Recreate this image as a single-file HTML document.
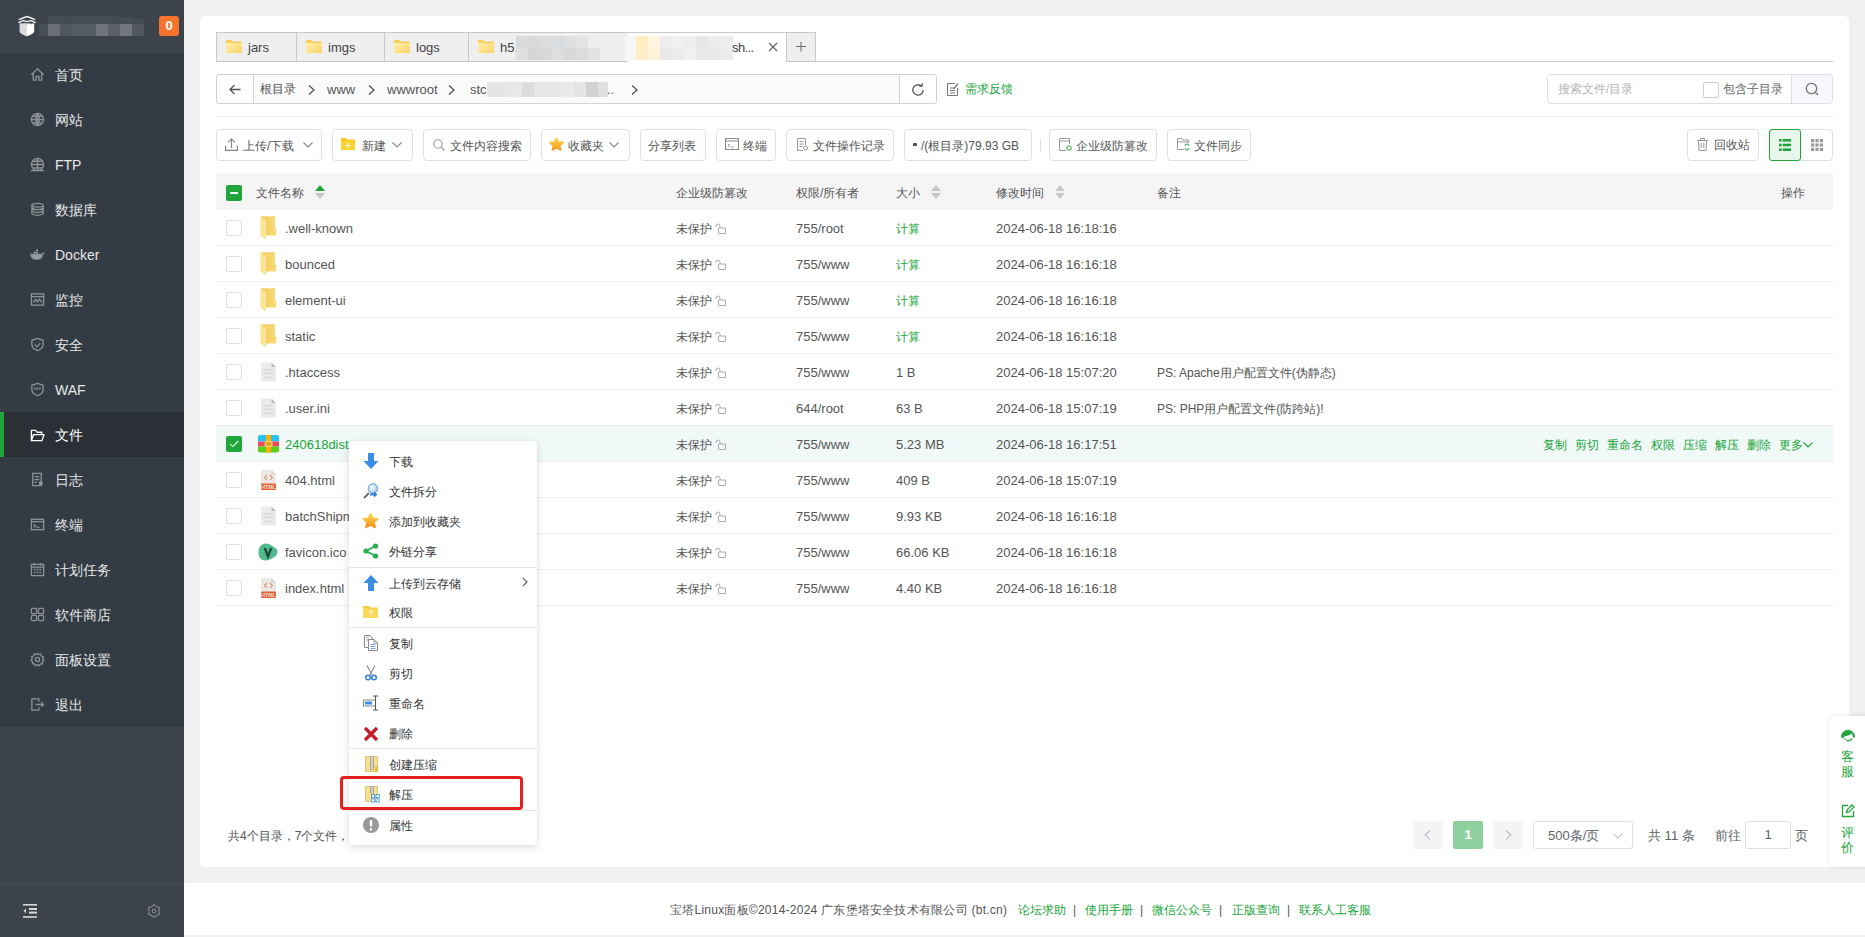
<!DOCTYPE html><html><head><meta charset="utf-8"><style>
*{margin:0;padding:0;box-sizing:border-box}
html,body{width:1865px;height:937px;overflow:hidden;background:#f0f0f0;font-family:"Liberation Sans",sans-serif;color:#666;font-size:12px}
.a{position:absolute}
.t{position:absolute;white-space:nowrap;line-height:1}
svg{position:absolute;overflow:visible}
</style></head><body>

<div class="a" style="left:0;top:0;width:184px;height:937px;background:#3c434b"></div>
<div class="a" style="left:0;top:53px;width:184px;height:674px;background:#333c44"></div>
<div class="a" style="left:0;top:883px;width:184px;height:1px;background:#454c54"></div>
<svg style="left:0px;top:0px" width="50" height="50" viewBox="0 0 50 50">
<path d="M19.8 23.4 H34.2 V31.5 Q34 33.8 27 36.2 Q20 33.8 19.8 31.5 Z" fill="#ffffff"/>
<path d="M19.8 23.4 H27 V36.2 Q20 33.8 19.8 31.5 Z" fill="#dcdcdc"/>
<path d="M18.3 22.6 L23 20.6 L27 21.6 L31 20.6 L35.7 22.6" stroke="#f0f0f0" stroke-width="1.4" fill="none" stroke-linejoin="round"/>
<path d="M18.8 19.6 L23 18 L27 16.5 L31 18 L35.2 19.6" stroke="#f0f0f0" stroke-width="1.4" fill="none" stroke-linejoin="round"/>
<path d="M22 23.4 L22.4 24.8 L23 23.4 M26.6 23.4 L27 24.8 L27.4 23.4 M31 23.4 L31.4 24.8 L32 23.4" fill="#3c434b"/>
</svg>
<div class="a" style="left:39px;top:24px;width:9px;height:12px;background:#474e56"></div>
<div class="a" style="left:48px;top:16px;width:12px;height:8px;background:#464d55"></div>
<div class="a" style="left:48px;top:24px;width:12px;height:12px;background:#6a6f75"></div>
<div class="a" style="left:60px;top:16px;width:12px;height:8px;background:#444b53"></div>
<div class="a" style="left:60px;top:24px;width:12px;height:12px;background:#50575e"></div>
<div class="a" style="left:72px;top:16px;width:24px;height:8px;background:#454c54"></div>
<div class="a" style="left:72px;top:24px;width:24px;height:12px;background:#555b62"></div>
<div class="a" style="left:96px;top:16px;width:12px;height:8px;background:#464d55"></div>
<div class="a" style="left:96px;top:24px;width:12px;height:12px;background:#6f757b"></div>
<div class="a" style="left:108px;top:16px;width:12px;height:8px;background:#444b53"></div>
<div class="a" style="left:108px;top:24px;width:12px;height:12px;background:#5a6067"></div>
<div class="a" style="left:120px;top:17px;width:12px;height:7px;background:#454c54"></div>
<div class="a" style="left:120px;top:24px;width:12px;height:12px;background:#71777c"></div>
<div class="a" style="left:132px;top:19px;width:12px;height:5px;background:#434a52"></div>
<div class="a" style="left:132px;top:24px;width:12px;height:12px;background:#50575e"></div>
<div class="a" style="left:159px;top:16px;width:20px;height:20px;background:#f5732a;border-radius:3px;color:#fff;font-weight:bold;font-size:13px;line-height:20px;text-align:center">0</div>
<div class="t" style="left:55px;top:68px;font-size:14px;color:#e6e6e6;line-height:15px">首页</div>
<div class="t" style="left:55px;top:113px;font-size:14px;color:#e6e6e6;line-height:15px">网站</div>
<div class="t" style="left:55px;top:158px;font-size:14px;color:#e6e6e6;line-height:15px">FTP</div>
<div class="t" style="left:55px;top:203px;font-size:14px;color:#e6e6e6;line-height:15px">数据库</div>
<div class="t" style="left:55px;top:248px;font-size:14px;color:#e6e6e6;line-height:15px">Docker</div>
<div class="t" style="left:55px;top:293px;font-size:14px;color:#e6e6e6;line-height:15px">监控</div>
<div class="t" style="left:55px;top:338px;font-size:14px;color:#e6e6e6;line-height:15px">安全</div>
<div class="t" style="left:55px;top:383px;font-size:14px;color:#e6e6e6;line-height:15px">WAF</div>
<div class="a" style="left:0;top:412px;width:184px;height:45px;background:#2b3036"></div>
<div class="a" style="left:0;top:412px;width:4px;height:45px;background:#20a53a"></div>
<div class="t" style="left:55px;top:428px;font-size:14px;color:#ffffff;line-height:15px">文件</div>
<div class="t" style="left:55px;top:473px;font-size:14px;color:#e6e6e6;line-height:15px">日志</div>
<div class="t" style="left:55px;top:518px;font-size:14px;color:#e6e6e6;line-height:15px">终端</div>
<div class="t" style="left:55px;top:563px;font-size:14px;color:#e6e6e6;line-height:15px">计划任务</div>
<div class="t" style="left:55px;top:608px;font-size:14px;color:#e6e6e6;line-height:15px">软件商店</div>
<div class="t" style="left:55px;top:653px;font-size:14px;color:#e6e6e6;line-height:15px">面板设置</div>
<div class="t" style="left:55px;top:698px;font-size:14px;color:#e6e6e6;line-height:15px">退出</div>
<svg style="left:30px;top:67px" width="15" height="15" viewBox="0 0 16 16" fill="none" stroke="#8e9297" stroke-width="1.4"><path d="M1.5 8 L8 2 L14.5 8 M3.5 6.5 V14 H6.5 V10 H9.5 V14 H12.5 V6.5"/></svg>
<svg style="left:30px;top:112px" width="15" height="15" viewBox="0 0 16 16" fill="none" stroke="#8e9297" stroke-width="1.4"><circle cx="8" cy="8" r="6.5"/><path d="M1.5 8 H14.5 M8 1.5 V14.5 M3 4.5 H13 M3 11.5 H13 M8 1.5 Q4 8 8 14.5 M8 1.5 Q12 8 8 14.5"/></svg>
<svg style="left:30px;top:157px" width="15" height="15" viewBox="0 0 16 16" fill="none" stroke="#8e9297" stroke-width="1.4"><circle cx="8" cy="8" r="6.5"/><path d="M1.5 8 H14.5 M8 1.5 V14.5 M3 4.5 H13 M3 11.5 H13"/><path d="M1 14.5 H15"/></svg>
<svg style="left:30px;top:202px" width="15" height="15" viewBox="0 0 16 16" fill="none" stroke="#8e9297" stroke-width="1.4"><ellipse cx="8" cy="3.5" rx="6" ry="2"/><path d="M2 3.5 V12.5 Q8 16 14 12.5 V3.5 M2 6.5 Q8 10 14 6.5 M2 9.5 Q8 13 14 9.5"/></svg>
<svg style="left:30px;top:247px" width="15" height="15" viewBox="0 0 16 16" fill="none" stroke="#8e9297" stroke-width="1.4"><path d="M1 8 H13 Q13 13 7 13 Q2 13 1 8 Z" fill="#9a9ea3"/><rect x="4" y="5" width="2" height="2" fill="#9a9ea3" stroke="none"/><rect x="6.5" y="5" width="2" height="2" fill="#9a9ea3" stroke="none"/><rect x="6.5" y="2.5" width="2" height="2" fill="#9a9ea3" stroke="none"/><path d="M13 8 Q14 6 15.5 7"/></svg>
<svg style="left:30px;top:292px" width="15" height="15" viewBox="0 0 16 16" fill="none" stroke="#8e9297" stroke-width="1.4"><rect x="1.5" y="2" width="13" height="12"/><path d="M1.5 5 H14.5 M3.5 11 L6 8 L8 10.5 L10 7.5 L12.5 11"/></svg>
<svg style="left:30px;top:337px" width="15" height="15" viewBox="0 0 16 16" fill="none" stroke="#8e9297" stroke-width="1.4"><path d="M8 1.5 L14 3.5 V8 Q14 12.5 8 14.5 Q2 12.5 2 8 V3.5 Z M5 8 L7.5 10.5 L11 6.5"/></svg>
<svg style="left:30px;top:382px" width="15" height="15" viewBox="0 0 16 16" fill="none" stroke="#8e9297" stroke-width="1.4"><path d="M8 1.5 L14 3.5 V8 Q14 12.5 8 14.5 Q2 12.5 2 8 V3.5 Z"/><path d="M4.5 7 H11.5" stroke-width="2.5" stroke-dasharray="1 0.6"/></svg>
<svg style="left:30px;top:428px" width="15" height="15" viewBox="0 0 16 16" fill="none" stroke="#ffffff" stroke-width="1.4" stroke-linejoin="round"><path d="M1.5 13.5 V2.5 H6 L7.5 4.5 H12.5 V7 M1.5 13.5 L3.8 7 H15 L12.8 13.5 Z"/></svg>
<svg style="left:30px;top:472px" width="15" height="15" viewBox="0 0 16 16" fill="none" stroke="#8e9297" stroke-width="1.4"><path d="M3 1.5 H12 V14.5 H3 Z M5 5 H10 M5 8 H10 M5 11 H7.5"/><circle cx="11.5" cy="12" r="1.5" fill="#9a9ea3"/></svg>
<svg style="left:30px;top:517px" width="15" height="15" viewBox="0 0 16 16" fill="none" stroke="#8e9297" stroke-width="1.4"><rect x="1.5" y="2.5" width="13" height="11"/><path d="M1.5 5 H14.5 M4 8 L6 9.5 L4 11 M7 11 H10"/></svg>
<svg style="left:30px;top:562px" width="15" height="15" viewBox="0 0 16 16" fill="none" stroke="#8e9297" stroke-width="1.4"><rect x="1.5" y="2.5" width="13" height="12"/><path d="M1.5 5.5 H14.5 M4.5 1 V4 M11.5 1 V4 M4 8 H6 M7 8 H9 M10 8 H12 M4 11 H6 M7 11 H9 M10 11 H12"/></svg>
<svg style="left:30px;top:607px" width="15" height="15" viewBox="0 0 16 16" fill="none" stroke="#8e9297" stroke-width="1.4"><rect x="1.5" y="1.5" width="5.5" height="5.5" rx="1"/><rect x="9" y="1.5" width="5.5" height="5.5" rx="1"/><rect x="1.5" y="9" width="5.5" height="5.5" rx="1"/><rect x="9" y="9" width="5.5" height="5.5" rx="1"/></svg>
<svg style="left:30px;top:652px" width="15" height="15" viewBox="0 0 16 16" fill="none" stroke="#8e9297" stroke-width="1.4"><circle cx="8" cy="8" r="2.2"/><path d="M8 1.5 L9.5 2.8 L11.6 2.3 L12.2 4.3 L14.2 5.2 L13.6 7.3 L14.8 9 L13.2 10.4 L13.3 12.5 L11.2 12.8 L10 14.6 L8 13.7 L6 14.6 L4.8 12.8 L2.7 12.5 L2.8 10.4 L1.2 9 L2.4 7.3 L1.8 5.2 L3.8 4.3 L4.4 2.3 L6.5 2.8 Z"/></svg>
<svg style="left:30px;top:697px" width="15" height="15" viewBox="0 0 16 16" fill="none" stroke="#8e9297" stroke-width="1.4"><path d="M9.5 5 V2 H2 V14 H9.5 V11 M6 8 H14.5 M12 5.5 L14.5 8 L12 10.5"/></svg>
<svg style="left:23px;top:904px" width="14" height="14" viewBox="0 0 14 14" fill="#d8d8d8"><rect x="0" y="0" width="14" height="1.6"/><rect x="6" y="4" width="8" height="2"/><rect x="6" y="7.6" width="8" height="2"/><rect x="0" y="12.2" width="14" height="1.6"/><path d="M3 4.5 L0.5 6.9 L3 9.3 Z"/></svg>
<svg style="left:147px;top:904px" width="14" height="14" viewBox="0 0 14 14" stroke="#8a8f94" stroke-width="1.1" fill="none" stroke-linejoin="round"><circle cx="7" cy="7" r="1.8"/><path d="M7.00 0.70 L9.50 2.67 L12.46 3.85 L12.00 7.00 L12.46 10.15 L9.50 11.33 L7.00 13.30 L4.50 11.33 L1.54 10.15 L2.00 7.00 L1.54 3.85 L4.50 2.67 Z"/></svg>
<div class="a" style="left:200px;top:16px;width:1649px;height:851px;background:#fff;border-radius:5px"></div>
<div class="a" style="left:184px;top:883px;width:1681px;height:52px;background:#fff"></div>
<div class="t" style="left:670px;top:903px;font-size:12px;color:#555;line-height:14px;width:339px;letter-spacing:0.24px;">宝塔Linux面板©2014-2024 广东堡塔安全技术有限公司 (bt.cn)</div>
<div class="t" style="left:1018px;top:903px;font-size:12px;color:#20a53a;line-height:14px;">论坛求助</div>
<div class="t" style="left:1073px;top:903px;font-size:12px;color:#555;line-height:14px;">|</div>
<div class="t" style="left:1085px;top:903px;font-size:12px;color:#20a53a;line-height:14px;">使用手册</div>
<div class="t" style="left:1140px;top:903px;font-size:12px;color:#555;line-height:14px;">|</div>
<div class="t" style="left:1152px;top:903px;font-size:12px;color:#20a53a;line-height:14px;">微信公众号</div>
<div class="t" style="left:1219px;top:903px;font-size:12px;color:#555;line-height:14px;">|</div>
<div class="t" style="left:1232px;top:903px;font-size:12px;color:#20a53a;line-height:14px;">正版查询</div>
<div class="t" style="left:1287px;top:903px;font-size:12px;color:#555;line-height:14px;">|</div>
<div class="t" style="left:1299px;top:903px;font-size:12px;color:#20a53a;line-height:14px;">联系人工客服</div>
<div class="a" style="left:216px;top:61px;width:1617px;height:1px;background:#c8c8c8"></div>
<div class="a" style="left:216px;top:32px;width:81px;height:30px;background:#efefef;border:1px solid #c8c8c8"></div>
<div class="a" style="left:296px;top:32px;width:89px;height:30px;background:#efefef;border:1px solid #c8c8c8"></div>
<div class="a" style="left:384px;top:32px;width:85px;height:30px;background:#efefef;border:1px solid #c8c8c8"></div>
<div class="a" style="left:468px;top:32px;width:161px;height:30px;background:#efefef;border:1px solid #c8c8c8"></div>
<svg style="left:226px;top:40px" width="16" height="13" viewBox="0 0 16 13"><defs><linearGradient id="fg226" x1="0" y1="0" x2="1" y2="1"><stop offset="0" stop-color="#fff0b0"/><stop offset="1" stop-color="#fbd363"/></linearGradient></defs>
<path d="M0 1 Q0 0 1 0 H5 L6.5 1.5 H15 Q16 1.5 16 2.5 V12 Q16 13 15 13 H1 Q0 13 0 12 Z" fill="#f8cf5c"/><path d="M0 3 H16 V12 Q16 13 15 13 H1 Q0 13 0 12 Z" fill="url(#fg226)"/></svg>
<div class="t" style="left:248px;top:40px;font-size:13px;color:#444;line-height:15px">jars</div>
<svg style="left:306px;top:40px" width="16" height="13" viewBox="0 0 16 13"><defs><linearGradient id="fg306" x1="0" y1="0" x2="1" y2="1"><stop offset="0" stop-color="#fff0b0"/><stop offset="1" stop-color="#fbd363"/></linearGradient></defs>
<path d="M0 1 Q0 0 1 0 H5 L6.5 1.5 H15 Q16 1.5 16 2.5 V12 Q16 13 15 13 H1 Q0 13 0 12 Z" fill="#f8cf5c"/><path d="M0 3 H16 V12 Q16 13 15 13 H1 Q0 13 0 12 Z" fill="url(#fg306)"/></svg>
<div class="t" style="left:328px;top:40px;font-size:13px;color:#444;line-height:15px">imgs</div>
<svg style="left:394px;top:40px" width="16" height="13" viewBox="0 0 16 13"><defs><linearGradient id="fg394" x1="0" y1="0" x2="1" y2="1"><stop offset="0" stop-color="#fff0b0"/><stop offset="1" stop-color="#fbd363"/></linearGradient></defs>
<path d="M0 1 Q0 0 1 0 H5 L6.5 1.5 H15 Q16 1.5 16 2.5 V12 Q16 13 15 13 H1 Q0 13 0 12 Z" fill="#f8cf5c"/><path d="M0 3 H16 V12 Q16 13 15 13 H1 Q0 13 0 12 Z" fill="url(#fg394)"/></svg>
<div class="t" style="left:416px;top:40px;font-size:13px;color:#444;line-height:15px">logs</div>
<svg style="left:478px;top:40px" width="16" height="13" viewBox="0 0 16 13"><defs><linearGradient id="fg478" x1="0" y1="0" x2="1" y2="1"><stop offset="0" stop-color="#fff0b0"/><stop offset="1" stop-color="#fbd363"/></linearGradient></defs>
<path d="M0 1 Q0 0 1 0 H5 L6.5 1.5 H15 Q16 1.5 16 2.5 V12 Q16 13 15 13 H1 Q0 13 0 12 Z" fill="#f8cf5c"/><path d="M0 3 H16 V12 Q16 13 15 13 H1 Q0 13 0 12 Z" fill="url(#fg478)"/></svg>
<div class="t" style="left:500px;top:40px;font-size:13px;color:#444;line-height:15px">h5.</div>
<div class="a" style="left:516px;top:36px;width:12px;height:12px;background:#dadada"></div>
<div class="a" style="left:516px;top:48px;width:12px;height:12px;background:#dedede"></div>
<div class="a" style="left:528px;top:36px;width:12px;height:12px;background:#d9d9d9"></div>
<div class="a" style="left:528px;top:48px;width:12px;height:12px;background:#d6d6d6"></div>
<div class="a" style="left:540px;top:36px;width:12px;height:12px;background:#dcdcdc"></div>
<div class="a" style="left:540px;top:48px;width:12px;height:12px;background:#d8d8d8"></div>
<div class="a" style="left:552px;top:36px;width:12px;height:12px;background:#dadde0"></div>
<div class="a" style="left:552px;top:48px;width:12px;height:12px;background:#dedede"></div>
<div class="a" style="left:564px;top:36px;width:12px;height:12px;background:#e0e0e0"></div>
<div class="a" style="left:564px;top:48px;width:12px;height:12px;background:#d6d8da"></div>
<div class="a" style="left:576px;top:36px;width:12px;height:12px;background:#e4e4e4"></div>
<div class="a" style="left:576px;top:48px;width:12px;height:12px;background:#dcdcdc"></div>
<div class="a" style="left:588px;top:48px;width:12px;height:12px;background:#e2e2e2"></div>
<div class="a" style="left:628px;top:32px;width:159px;height:30px;background:#fff;border-top:1px solid #c8c8c8"></div>
<div class="a" style="left:625px;top:36px;width:12px;height:24px;background:#f6f6f6"></div>
<div class="a" style="left:636px;top:36px;width:12px;height:12px;background:#fdedc0"></div>
<div class="a" style="left:636px;top:48px;width:12px;height:12px;background:#fdf0c8"></div>
<div class="a" style="left:648px;top:36px;width:12px;height:12px;background:#fdf5dd"></div>
<div class="a" style="left:648px;top:48px;width:12px;height:12px;background:#fdf3d8"></div>
<div class="a" style="left:660px;top:36px;width:12px;height:12px;background:#ededed"></div>
<div class="a" style="left:660px;top:48px;width:12px;height:12px;background:#e8e8e8"></div>
<div class="a" style="left:672px;top:36px;width:12px;height:12px;background:#f1f1f1"></div>
<div class="a" style="left:672px;top:48px;width:12px;height:12px;background:#ebebeb"></div>
<div class="a" style="left:684px;top:36px;width:12px;height:12px;background:#eeeeee"></div>
<div class="a" style="left:684px;top:48px;width:12px;height:12px;background:#f0f0f0"></div>
<div class="a" style="left:696px;top:36px;width:12px;height:12px;background:#e6e6e8"></div>
<div class="a" style="left:696px;top:48px;width:12px;height:12px;background:#e9e9e9"></div>
<div class="a" style="left:708px;top:36px;width:12px;height:12px;background:#ececec"></div>
<div class="a" style="left:708px;top:48px;width:12px;height:12px;background:#eaeaea"></div>
<div class="a" style="left:720px;top:36px;width:13px;height:12px;background:#ededed"></div>
<div class="a" style="left:720px;top:48px;width:13px;height:12px;background:#ebebeb"></div>
<div class="t" style="left:732px;top:40px;font-size:13px;color:#444;line-height:15px;letter-spacing:-0.6px">sh...</div>
<svg style="left:768px;top:42px" width="10" height="10" viewBox="0 0 10 10" stroke="#606060" stroke-width="1.1"><path d="M1 1 L9 9 M9 1 L1 9"/></svg>
<div class="a" style="left:786px;top:32px;width:30px;height:30px;background:#efefef;border:1px solid #c8c8c8"></div>
<svg style="left:796px;top:42px" width="10" height="10" viewBox="0 0 10 10" stroke="#707070" stroke-width="1.1"><path d="M5 0 V9.5 M0 4.5 H10"/></svg>
<div class="a" style="left:216px;top:74px;width:721px;height:30px;border:1px solid #d2d2d2;border-radius:3px;background:#fff"></div>
<div class="a" style="left:253px;top:75px;width:646px;height:28px;background:#fafafa;border-left:1px solid #d2d2d2"></div>
<div class="a" style="left:899px;top:75px;width:1px;height:28px;background:#d2d2d2"></div>
<svg style="left:229px;top:84px" width="12" height="11" viewBox="0 0 12 11" stroke="#555" stroke-width="1.3" fill="none"><path d="M11.5 5.5 H1 M5.5 1 L1 5.5 L5.5 10"/></svg>
<div class="t" style="left:260px;top:82px;font-size:12px;color:#555;line-height:15px">根目录</div>
<div class="t" style="left:327px;top:82px;font-size:13px;color:#555;line-height:15px">www</div>
<div class="t" style="left:387px;top:82px;font-size:13px;color:#555;line-height:15px">wwwroot</div>
<div class="t" style="left:470px;top:82px;font-size:13px;color:#555;line-height:15px">stc</div>
<svg style="left:308px;top:85px" width="7" height="10" viewBox="0 0 7 10" stroke="#555" stroke-width="1.3" fill="none"><path d="M1 0.5 L6 5 L1 9.5"/></svg>
<svg style="left:368px;top:85px" width="7" height="10" viewBox="0 0 7 10" stroke="#555" stroke-width="1.3" fill="none"><path d="M1 0.5 L6 5 L1 9.5"/></svg>
<svg style="left:448px;top:85px" width="7" height="10" viewBox="0 0 7 10" stroke="#555" stroke-width="1.3" fill="none"><path d="M1 0.5 L6 5 L1 9.5"/></svg>
<svg style="left:631px;top:85px" width="7" height="10" viewBox="0 0 7 10" stroke="#555" stroke-width="1.3" fill="none"><path d="M1 0.5 L6 5 L1 9.5"/></svg>
<div class="a" style="left:487px;top:82px;width:19px;height:15px;background:#e5e5e5"></div>
<div class="a" style="left:506px;top:82px;width:16px;height:15px;background:#e8e8e8"></div>
<div class="a" style="left:522px;top:82px;width:12px;height:15px;background:#dcdcdf"></div>
<div class="a" style="left:534px;top:82px;width:24px;height:15px;background:#e6e6e6"></div>
<div class="a" style="left:558px;top:82px;width:16px;height:15px;background:#e9e9e9"></div>
<div class="a" style="left:574px;top:82px;width:12px;height:15px;background:#e3e5e6"></div>
<div class="a" style="left:586px;top:82px;width:12px;height:15px;background:#d2d2d2"></div>
<div class="a" style="left:598px;top:82px;width:10px;height:15px;background:#e0e0e0"></div>
<div class="t" style="left:607px;top:82px;font-size:13px;color:#555;line-height:15px">..</div>
<svg style="left:911px;top:83px" width="14" height="14" viewBox="0 0 14 14" stroke="#555" stroke-width="1.3" fill="none"><path d="M12.2 7 A5.2 5.2 0 1 1 10.5 3.1"/><path d="M8 2.8 L11 3.2 L11.3 0.3" /></svg>
<svg style="left:946px;top:82px" width="13" height="15" viewBox="0 0 13 15" stroke="#777" stroke-width="1" fill="none"><path d="M9 1.5 H1.5 V13.5 H11.5 V6"/><path d="M4 6 H8 M4 8.5 H9 M4 11 H9"/><path d="M7.5 7 L12 1.5" stroke-width="1.3"/></svg>
<div class="t" style="left:965px;top:82px;font-size:12px;color:#20a53a;line-height:14px">需求反馈</div>
<div class="a" style="left:1547px;top:74px;width:286px;height:30px;border:1px solid #dcdfe6;border-radius:4px;background:#fff"></div>
<div class="a" style="left:1791px;top:75px;width:41px;height:28px;background:#f5f7fa;border-left:1px solid #dcdfe6;border-radius:0 3px 3px 0"></div>
<div class="t" style="left:1558px;top:82px;font-size:12px;color:#b4b4b4;line-height:14px">搜索文件/目录</div>
<div class="a" style="left:1703px;top:82px;width:16px;height:16px;border:1px solid #d0d0d0;border-radius:2px;background:#fff"></div>
<div class="t" style="left:1723px;top:82px;font-size:12px;color:#666;line-height:14px">包含子目录</div>
<svg style="left:1805px;top:82px" width="14" height="14" viewBox="0 0 14 14" stroke="#777" stroke-width="1.3" fill="none"><circle cx="6.5" cy="6.5" r="5.2"/><path d="M10.3 10.3 L13 13"/></svg>
<div class="a" style="left:216px;top:116px;width:1617px;height:1px;background:#eee"></div>
<div class="a" style="left:216px;top:129px;width:106px;height:32px;border:1px solid #dcdfe6;border-radius:4px;background:#fff"></div>
<svg style="left:225px;top:138px" width="13" height="13" viewBox="0 0 13 13" stroke="#888" stroke-width="1.2" fill="none"><path d="M0.6 7.5 V12.4 H12.4 V7.5 M6.5 10 V1 M3 4.3 L6.5 0.8 L10 4.3"/></svg>
<div class="t" style="left:243px;top:139px;font-size:12px;color:#555;line-height:14px;">上传/下载</div>
<svg style="left:303px;top:142px" width="10" height="6" viewBox="0 0 10 6" stroke="#888" stroke-width="1.1" fill="none"><path d="M0.5 0.5 L5 5 L9.5 0.5"/></svg>
<div class="a" style="left:332px;top:129px;width:81px;height:32px;border:1px solid #dcdfe6;border-radius:4px;background:#fff"></div>
<svg style="left:341px;top:138px" width="14" height="12" viewBox="0 0 14 12"><path d="M0 0 H5 L6 1.5 H14 V12 H0 Z" fill="#f5c518"/><path d="M0 2.5 H14 V12 H0 Z" fill="#fcd22e"/><path d="M7 5 V10 M4.5 7.5 H9.5" stroke="#fff" stroke-width="1.2"/></svg>
<div class="t" style="left:362px;top:139px;font-size:12px;color:#555;line-height:14px;">新建</div>
<svg style="left:392px;top:142px" width="10" height="6" viewBox="0 0 10 6" stroke="#888" stroke-width="1.1" fill="none"><path d="M0.5 0.5 L5 5 L9.5 0.5"/></svg>
<div class="a" style="left:423px;top:129px;width:108px;height:32px;border:1px solid #dcdfe6;border-radius:4px;background:#fff"></div>
<svg style="left:433px;top:139px" width="12" height="12" viewBox="0 0 12 12" stroke="#999" stroke-width="1.1" fill="none"><circle cx="5" cy="5" r="4.2"/><path d="M8 8 L11.5 11.5"/></svg>
<div class="t" style="left:450px;top:139px;font-size:12px;color:#555;line-height:14px;">文件内容搜索</div>
<div class="a" style="left:541px;top:129px;width:89px;height:32px;border:1px solid #dcdfe6;border-radius:4px;background:#fff"></div>
<svg style="left:549px;top:137px" width="15" height="14" viewBox="0 0 15 14"><defs><linearGradient id="stg" x1="0" y1="0" x2="0" y2="1"><stop offset="0" stop-color="#ffd64a"/><stop offset="1" stop-color="#f59a16"/></linearGradient></defs><path d="M7.5 0.8 L9.6 5 L14.2 5.5 L10.8 8.7 L11.7 13.3 L7.5 11 L3.3 13.3 L4.2 8.7 L0.8 5.5 L5.4 5 Z" fill="url(#stg)" stroke="url(#stg)" stroke-width="1.3" stroke-linejoin="round"/></svg>
<div class="t" style="left:568px;top:139px;font-size:12px;color:#555;line-height:14px;">收藏夹</div>
<svg style="left:609px;top:142px" width="10" height="6" viewBox="0 0 10 6" stroke="#888" stroke-width="1.1" fill="none"><path d="M0.5 0.5 L5 5 L9.5 0.5"/></svg>
<div class="a" style="left:640px;top:129px;width:66px;height:32px;border:1px solid #dcdfe6;border-radius:4px;background:#fff"></div>
<div class="t" style="left:648px;top:139px;font-size:12px;color:#555;line-height:14px;">分享列表</div>
<div class="a" style="left:716px;top:129px;width:60px;height:32px;border:1px solid #dcdfe6;border-radius:4px;background:#fff"></div>
<svg style="left:725px;top:138px" width="14" height="12" viewBox="0 0 14 12" stroke="#888" stroke-width="1" fill="none"><rect x="0.5" y="0.5" width="13" height="11"/><path d="M0.5 3 H13.5 M3 6 L5 7.5 L3 9 M6 9 H8.5"/></svg>
<div class="t" style="left:743px;top:139px;font-size:12px;color:#555;line-height:14px;">终端</div>
<div class="a" style="left:786px;top:129px;width:108px;height:32px;border:1px solid #dcdfe6;border-radius:4px;background:#fff"></div>
<svg style="left:797px;top:138px" width="11" height="13" viewBox="0 0 11 13" stroke="#999" stroke-width="1" fill="none"><path d="M0.5 0.5 H8.5 V7 M0.5 0.5 V12.5 H6 M2.5 3.5 H6.5 M2.5 6 H6.5 M2.5 8.5 H5"/><circle cx="8.5" cy="10" r="2" /></svg>
<div class="t" style="left:813px;top:139px;font-size:12px;color:#555;line-height:14px;">文件操作记录</div>
<div class="a" style="left:904px;top:129px;width:128px;height:32px;border:1px solid #dcdfe6;border-radius:4px;background:#fff"></div>
<div class="a" style="left:913px;top:143px;width:4px;height:3px;background:#555;border-radius:1px 1px 0 0"></div>
<div class="t" style="left:921px;top:139px;font-size:12px;color:#555;line-height:14px;">/(根目录)79.93 GB</div>
<div class="a" style="left:1040px;top:139px;width:1px;height:12px;background:#ddd"></div>
<div class="a" style="left:1049px;top:129px;width:108px;height:32px;border:1px solid #dcdfe6;border-radius:4px;background:#fff"></div>
<svg style="left:1059px;top:138px" width="13" height="13" viewBox="0 0 13 13" stroke="#999" stroke-width="1" fill="none"><path d="M0.5 0.5 H10.5 V6 M0.5 0.5 V12.5 H7 M0.5 3 H10.5"/><circle cx="10" cy="10" r="2.2" stroke="#20a53a"/></svg>
<div class="t" style="left:1076px;top:139px;font-size:12px;color:#555;line-height:14px;">企业级防篡改</div>
<div class="a" style="left:1167px;top:129px;width:84px;height:32px;border:1px solid #dcdfe6;border-radius:4px;background:#fff"></div>
<svg style="left:1177px;top:138px" width="13" height="12" viewBox="0 0 13 12" stroke="#999" stroke-width="1" fill="none"><path d="M0.5 11.5 V0.5 H4.5 L5.5 2 H11.5 V5 M0.5 11.5 H7 M0.5 4 H11.5"/><path d="M8 8 A2 2 0 0 1 12 8 M12 10 A2 2 0 0 1 8 10" stroke="#20a53a"/></svg>
<div class="t" style="left:1194px;top:139px;font-size:12px;color:#555;line-height:14px;">文件同步</div>
<div class="a" style="left:1687px;top:129px;width:72px;height:32px;border:1px solid #dcdfe6;border-radius:4px;background:#fff"></div>
<svg style="left:1697px;top:138px" width="11" height="13" viewBox="0 0 11 13" stroke="#999" stroke-width="1" fill="none"><path d="M0 2.5 H11 M3.5 2.5 V0.5 H7.5 V2.5 M1.5 2.5 L2 12.5 H9 L9.5 2.5 M4.2 5 V10 M6.8 5 V10"/></svg>
<div class="t" style="left:1714px;top:138px;font-size:12px;color:#555;line-height:14px;">回收站</div>
<div class="a" style="left:1769px;top:129px;width:64px;height:32px;border:1px solid #dcdfe6;border-radius:4px"></div>
<div class="a" style="left:1769px;top:129px;width:32px;height:32px;border:1px solid #20a53a;border-radius:3px;background:#e9f6eb"></div>
<svg style="left:1779px;top:139px" width="12" height="12" viewBox="0 0 12 12" fill="#20a53a"><rect x="0" y="0" width="2.6" height="2.6"/><rect x="3.6" y="0" width="8.4" height="2.6"/><rect x="0" y="4.7" width="2.6" height="2.6"/><rect x="3.6" y="4.7" width="8.4" height="2.6"/><rect x="0" y="9.4" width="2.6" height="2.6"/><rect x="3.6" y="9.4" width="8.4" height="2.6"/></svg>
<svg style="left:1811px;top:139px" width="12" height="12" viewBox="0 0 12 12" fill="#9a9a9a"><rect x="0" y="0" width="3.2" height="3.2"/><rect x="4.4" y="0" width="3.2" height="3.2"/><rect x="8.8" y="0" width="3.2" height="3.2"/><rect x="0" y="4.4" width="3.2" height="3.2"/><rect x="4.4" y="4.4" width="3.2" height="3.2"/><rect x="8.8" y="4.4" width="3.2" height="3.2"/><rect x="0" y="8.8" width="3.2" height="3.2"/><rect x="4.4" y="8.8" width="3.2" height="3.2"/><rect x="8.8" y="8.8" width="3.2" height="3.2"/></svg>
<div class="a" style="left:216px;top:173px;width:1617px;height:37px;background:#f5f5f5"></div>
<div class="a" style="left:226px;top:185px;width:16px;height:16px;background:#20a53a;border-radius:2px"></div>
<div class="a" style="left:230px;top:192px;width:8px;height:2px;background:#fff"></div>
<div class="t" style="left:256px;top:186px;font-size:12px;color:#555;line-height:14px;">文件名称</div>
<svg style="left:315px;top:185px" width="10" height="14" viewBox="0 0 10 14"><path d="M5 0 L10 6 H0 Z" fill="#20a53a"/><path d="M5 14 L10 8 H0 Z" fill="#c6c6c6"/></svg>
<div class="t" style="left:676px;top:186px;font-size:12px;color:#555;line-height:14px;">企业级防篡改</div>
<div class="t" style="left:796px;top:186px;font-size:12px;color:#555;line-height:14px;">权限/所有者</div>
<div class="t" style="left:896px;top:186px;font-size:12px;color:#555;line-height:14px;">大小</div>
<svg style="left:931px;top:185px" width="10" height="14" viewBox="0 0 10 14"><path d="M5 0 L10 6 H0 Z" fill="#c6c6c6"/><path d="M5 14 L10 8 H0 Z" fill="#c6c6c6"/></svg>
<div class="t" style="left:996px;top:186px;font-size:12px;color:#555;line-height:14px;">修改时间</div>
<svg style="left:1055px;top:185px" width="10" height="14" viewBox="0 0 10 14"><path d="M5 0 L10 6 H0 Z" fill="#c6c6c6"/><path d="M5 14 L10 8 H0 Z" fill="#c6c6c6"/></svg>
<div class="t" style="left:1157px;top:186px;font-size:12px;color:#555;line-height:14px;">备注</div>
<div class="t" style="left:1781px;top:186px;font-size:12px;color:#555;line-height:14px;">操作</div>
<div class="a" style="left:216px;top:245px;width:1617px;height:1px;background:#eeeeee"></div>
<div class="a" style="left:226px;top:220px;width:16px;height:16px;border:1px solid #dcdfe6;border-radius:2px;background:#fff"></div>
<svg style="left:260px;top:216px" width="17" height="24" viewBox="0 0 17 24"><defs><linearGradient id="vb228" x1="0" y1="0" x2="1" y2="0"><stop offset="0" stop-color="#efc95a"/><stop offset="1" stop-color="#fadb78"/></linearGradient><linearGradient id="vf228" x1="0" y1="0" x2="1" y2="0"><stop offset="0" stop-color="#fbe08a"/><stop offset="1" stop-color="#fde79e"/></linearGradient></defs>
<path d="M0.5 0.2 H15 V12.3 L16.3 13 V19.6 H5.5 V4.5 Z" fill="url(#vb228)"/><path d="M0.5 0.2 L6 4.3 V23.6 L0.5 19.6 Z" fill="url(#vf228)"/></svg>
<div class="t" style="left:285px;top:221px;font-size:13px;color:#555;line-height:15px;">.well-known</div>
<div class="t" style="left:676px;top:222px;font-size:12px;color:#555;line-height:14px;">未保护</div>
<svg style="left:715px;top:223px" width="11" height="11" viewBox="0 0 11 11" stroke="#aaa" stroke-width="1" fill="none"><rect x="3.5" y="5" width="7" height="5.5" rx="0.5"/><path d="M5 5 V3 A2 2 0 0 0 1 3 V4"/></svg>
<div class="t" style="left:796px;top:221px;font-size:13px;color:#555;line-height:15px;">755/root</div>
<div class="t" style="left:896px;top:222px;font-size:12px;color:#20a53a;line-height:14px;">计算</div>
<div class="t" style="left:996px;top:221px;font-size:13px;color:#555;line-height:15px;">2024-06-18 16:18:16</div>
<div class="a" style="left:216px;top:281px;width:1617px;height:1px;background:#eeeeee"></div>
<div class="a" style="left:226px;top:256px;width:16px;height:16px;border:1px solid #dcdfe6;border-radius:2px;background:#fff"></div>
<svg style="left:260px;top:252px" width="17" height="24" viewBox="0 0 17 24"><defs><linearGradient id="vb264" x1="0" y1="0" x2="1" y2="0"><stop offset="0" stop-color="#efc95a"/><stop offset="1" stop-color="#fadb78"/></linearGradient><linearGradient id="vf264" x1="0" y1="0" x2="1" y2="0"><stop offset="0" stop-color="#fbe08a"/><stop offset="1" stop-color="#fde79e"/></linearGradient></defs>
<path d="M0.5 0.2 H15 V12.3 L16.3 13 V19.6 H5.5 V4.5 Z" fill="url(#vb264)"/><path d="M0.5 0.2 L6 4.3 V23.6 L0.5 19.6 Z" fill="url(#vf264)"/></svg>
<div class="t" style="left:285px;top:257px;font-size:13px;color:#555;line-height:15px;">bounced</div>
<div class="t" style="left:676px;top:258px;font-size:12px;color:#555;line-height:14px;">未保护</div>
<svg style="left:715px;top:259px" width="11" height="11" viewBox="0 0 11 11" stroke="#aaa" stroke-width="1" fill="none"><rect x="3.5" y="5" width="7" height="5.5" rx="0.5"/><path d="M5 5 V3 A2 2 0 0 0 1 3 V4"/></svg>
<div class="t" style="left:796px;top:257px;font-size:13px;color:#555;line-height:15px;">755/www</div>
<div class="t" style="left:896px;top:258px;font-size:12px;color:#20a53a;line-height:14px;">计算</div>
<div class="t" style="left:996px;top:257px;font-size:13px;color:#555;line-height:15px;">2024-06-18 16:16:18</div>
<div class="a" style="left:216px;top:317px;width:1617px;height:1px;background:#eeeeee"></div>
<div class="a" style="left:226px;top:292px;width:16px;height:16px;border:1px solid #dcdfe6;border-radius:2px;background:#fff"></div>
<svg style="left:260px;top:288px" width="17" height="24" viewBox="0 0 17 24"><defs><linearGradient id="vb300" x1="0" y1="0" x2="1" y2="0"><stop offset="0" stop-color="#efc95a"/><stop offset="1" stop-color="#fadb78"/></linearGradient><linearGradient id="vf300" x1="0" y1="0" x2="1" y2="0"><stop offset="0" stop-color="#fbe08a"/><stop offset="1" stop-color="#fde79e"/></linearGradient></defs>
<path d="M0.5 0.2 H15 V12.3 L16.3 13 V19.6 H5.5 V4.5 Z" fill="url(#vb300)"/><path d="M0.5 0.2 L6 4.3 V23.6 L0.5 19.6 Z" fill="url(#vf300)"/></svg>
<div class="t" style="left:285px;top:293px;font-size:13px;color:#555;line-height:15px;">element-ui</div>
<div class="t" style="left:676px;top:294px;font-size:12px;color:#555;line-height:14px;">未保护</div>
<svg style="left:715px;top:295px" width="11" height="11" viewBox="0 0 11 11" stroke="#aaa" stroke-width="1" fill="none"><rect x="3.5" y="5" width="7" height="5.5" rx="0.5"/><path d="M5 5 V3 A2 2 0 0 0 1 3 V4"/></svg>
<div class="t" style="left:796px;top:293px;font-size:13px;color:#555;line-height:15px;">755/www</div>
<div class="t" style="left:896px;top:294px;font-size:12px;color:#20a53a;line-height:14px;">计算</div>
<div class="t" style="left:996px;top:293px;font-size:13px;color:#555;line-height:15px;">2024-06-18 16:16:18</div>
<div class="a" style="left:216px;top:353px;width:1617px;height:1px;background:#eeeeee"></div>
<div class="a" style="left:226px;top:328px;width:16px;height:16px;border:1px solid #dcdfe6;border-radius:2px;background:#fff"></div>
<svg style="left:260px;top:324px" width="17" height="24" viewBox="0 0 17 24"><defs><linearGradient id="vb336" x1="0" y1="0" x2="1" y2="0"><stop offset="0" stop-color="#efc95a"/><stop offset="1" stop-color="#fadb78"/></linearGradient><linearGradient id="vf336" x1="0" y1="0" x2="1" y2="0"><stop offset="0" stop-color="#fbe08a"/><stop offset="1" stop-color="#fde79e"/></linearGradient></defs>
<path d="M0.5 0.2 H15 V12.3 L16.3 13 V19.6 H5.5 V4.5 Z" fill="url(#vb336)"/><path d="M0.5 0.2 L6 4.3 V23.6 L0.5 19.6 Z" fill="url(#vf336)"/></svg>
<div class="t" style="left:285px;top:329px;font-size:13px;color:#555;line-height:15px;">static</div>
<div class="t" style="left:676px;top:330px;font-size:12px;color:#555;line-height:14px;">未保护</div>
<svg style="left:715px;top:331px" width="11" height="11" viewBox="0 0 11 11" stroke="#aaa" stroke-width="1" fill="none"><rect x="3.5" y="5" width="7" height="5.5" rx="0.5"/><path d="M5 5 V3 A2 2 0 0 0 1 3 V4"/></svg>
<div class="t" style="left:796px;top:329px;font-size:13px;color:#555;line-height:15px;">755/www</div>
<div class="t" style="left:896px;top:330px;font-size:12px;color:#20a53a;line-height:14px;">计算</div>
<div class="t" style="left:996px;top:329px;font-size:13px;color:#555;line-height:15px;">2024-06-18 16:16:18</div>
<div class="a" style="left:216px;top:389px;width:1617px;height:1px;background:#eeeeee"></div>
<div class="a" style="left:226px;top:364px;width:16px;height:16px;border:1px solid #dcdfe6;border-radius:2px;background:#fff"></div>
<svg style="left:261px;top:362px" width="15" height="20" viewBox="0 0 15 20"><path d="M0 0.5 H10.5 L15 5 V19.5 H0 Z" fill="#ebebeb"/><path d="M10.5 0.5 L15 5 H10.5 Z" fill="#bdbdbd"/><path d="M3 7.8 H12 M3 11.3 H12 M3 15.3 H12" stroke="#cfcfcf" stroke-width="1.1"/></svg>
<div class="t" style="left:285px;top:365px;font-size:13px;color:#555;line-height:15px;">.htaccess</div>
<div class="t" style="left:676px;top:366px;font-size:12px;color:#555;line-height:14px;">未保护</div>
<svg style="left:715px;top:367px" width="11" height="11" viewBox="0 0 11 11" stroke="#aaa" stroke-width="1" fill="none"><rect x="3.5" y="5" width="7" height="5.5" rx="0.5"/><path d="M5 5 V3 A2 2 0 0 0 1 3 V4"/></svg>
<div class="t" style="left:796px;top:365px;font-size:13px;color:#555;line-height:15px;">755/www</div>
<div class="t" style="left:896px;top:365px;font-size:13px;color:#555;line-height:15px;">1 B</div>
<div class="t" style="left:996px;top:365px;font-size:13px;color:#555;line-height:15px;">2024-06-18 15:07:20</div>
<div class="t" style="left:1157px;top:366px;font-size:12px;color:#555;line-height:14px;">PS: Apache用户配置文件(伪静态)</div>
<div class="a" style="left:216px;top:425px;width:1617px;height:1px;background:#eeeeee"></div>
<div class="a" style="left:226px;top:400px;width:16px;height:16px;border:1px solid #dcdfe6;border-radius:2px;background:#fff"></div>
<svg style="left:261px;top:398px" width="15" height="20" viewBox="0 0 15 20"><path d="M0 0.5 H10.5 L15 5 V19.5 H0 Z" fill="#ebebeb"/><path d="M10.5 0.5 L15 5 H10.5 Z" fill="#bdbdbd"/><path d="M3 7.8 H12 M3 11.3 H12 M3 15.3 H12" stroke="#cfcfcf" stroke-width="1.1"/></svg>
<div class="t" style="left:285px;top:401px;font-size:13px;color:#555;line-height:15px;">.user.ini</div>
<div class="t" style="left:676px;top:402px;font-size:12px;color:#555;line-height:14px;">未保护</div>
<svg style="left:715px;top:403px" width="11" height="11" viewBox="0 0 11 11" stroke="#aaa" stroke-width="1" fill="none"><rect x="3.5" y="5" width="7" height="5.5" rx="0.5"/><path d="M5 5 V3 A2 2 0 0 0 1 3 V4"/></svg>
<div class="t" style="left:796px;top:401px;font-size:13px;color:#555;line-height:15px;">644/root</div>
<div class="t" style="left:896px;top:401px;font-size:13px;color:#555;line-height:15px;">63 B</div>
<div class="t" style="left:996px;top:401px;font-size:13px;color:#555;line-height:15px;">2024-06-18 15:07:19</div>
<div class="t" style="left:1157px;top:402px;font-size:12px;color:#555;line-height:14px;">PS: PHP用户配置文件(防跨站)!</div>
<div class="a" style="left:216px;top:426px;width:1617px;height:36px;background:#f1f9f8"></div>
<div class="a" style="left:216px;top:461px;width:1617px;height:1px;background:#eeeeee"></div>
<div class="a" style="left:226px;top:436px;width:16px;height:16px;background:#20a53a;border-radius:2px"></div>
<svg style="left:229px;top:439px" width="10" height="9" viewBox="0 0 10 9" stroke="#e8ffe8" stroke-width="1.1" fill="none"><path d="M0.8 4.8 L3.8 7.6 L9.2 2"/></svg>
<svg style="left:258px;top:435px" width="21" height="18" viewBox="0 0 21 18"><clipPath id="zc444"><rect x="0" y="0" width="21" height="17.5" rx="2.2"/></clipPath><g clip-path="url(#zc444)"><rect x="0" y="0" width="21" height="6.5" fill="#27c2ef"/><rect x="0" y="6.5" width="21" height="5" fill="#f0485a"/><rect x="0" y="11.5" width="21" height="6.5" fill="#5ccd1b"/><rect x="8" y="0" width="5" height="18" fill="#ffad00"/></g><rect x="7" y="6.3" width="7" height="5.2" rx="2.2" fill="#eaa21a" stroke="#ffdf7a" stroke-width="1.1"/></svg>
<div class="t" style="left:285px;top:437px;font-size:13px;color:#20a53a;line-height:15px;">240618dist</div>
<div class="t" style="left:676px;top:438px;font-size:12px;color:#555;line-height:14px;">未保护</div>
<svg style="left:715px;top:439px" width="11" height="11" viewBox="0 0 11 11" stroke="#aaa" stroke-width="1" fill="none"><rect x="3.5" y="5" width="7" height="5.5" rx="0.5"/><path d="M5 5 V3 A2 2 0 0 0 1 3 V4"/></svg>
<div class="t" style="left:796px;top:437px;font-size:13px;color:#555;line-height:15px;">755/www</div>
<div class="t" style="left:896px;top:437px;font-size:13px;color:#555;line-height:15px;">5.23 MB</div>
<div class="t" style="left:996px;top:437px;font-size:13px;color:#555;line-height:15px;">2024-06-18 16:17:51</div>
<div class="t" style="left:1543px;top:438px;font-size:12px;color:#20a53a;line-height:14px;">复制</div>
<div class="t" style="left:1575px;top:438px;font-size:12px;color:#20a53a;line-height:14px;">剪切</div>
<div class="t" style="left:1607px;top:438px;font-size:12px;color:#20a53a;line-height:14px;">重命名</div>
<div class="t" style="left:1651px;top:438px;font-size:12px;color:#20a53a;line-height:14px;">权限</div>
<div class="t" style="left:1683px;top:438px;font-size:12px;color:#20a53a;line-height:14px;">压缩</div>
<div class="t" style="left:1715px;top:438px;font-size:12px;color:#20a53a;line-height:14px;">解压</div>
<div class="t" style="left:1747px;top:438px;font-size:12px;color:#20a53a;line-height:14px;">删除</div>
<div class="t" style="left:1779px;top:438px;font-size:12px;color:#20a53a;line-height:14px;">更多</div>
<svg style="left:1803px;top:442px" width="10" height="6" viewBox="0 0 10 6" stroke="#20a53a" stroke-width="1.1" fill="none"><path d="M0.5 0.5 L5 5 L9.5 0.5"/></svg>
<div class="a" style="left:216px;top:497px;width:1617px;height:1px;background:#eeeeee"></div>
<div class="a" style="left:226px;top:472px;width:16px;height:16px;border:1px solid #dcdfe6;border-radius:2px;background:#fff"></div>
<svg style="left:261px;top:470px" width="15" height="20" viewBox="0 0 15 20"><path d="M0 0 H10.5 L15 4.5 V20 H0 Z" fill="#ebe7e3"/><path d="M10.5 0 L15 4.5 H10.5 Z" fill="#d8d4d0"/><path d="M5.8 5.2 L3.6 7.6 L5.8 10 M9.2 5.2 L11.4 7.6 L9.2 10" stroke="#d98a64" stroke-width="1.1" fill="none"/><rect x="0" y="13.6" width="15" height="6.4" rx="1" fill="#e0663a"/><text x="7.5" y="18.8" font-size="5.2" font-family="Liberation Sans" font-weight="bold" fill="#f6d8c8" text-anchor="middle">HTML</text></svg>
<div class="t" style="left:285px;top:473px;font-size:13px;color:#555;line-height:15px;">404.html</div>
<div class="t" style="left:676px;top:474px;font-size:12px;color:#555;line-height:14px;">未保护</div>
<svg style="left:715px;top:475px" width="11" height="11" viewBox="0 0 11 11" stroke="#aaa" stroke-width="1" fill="none"><rect x="3.5" y="5" width="7" height="5.5" rx="0.5"/><path d="M5 5 V3 A2 2 0 0 0 1 3 V4"/></svg>
<div class="t" style="left:796px;top:473px;font-size:13px;color:#555;line-height:15px;">755/www</div>
<div class="t" style="left:896px;top:473px;font-size:13px;color:#555;line-height:15px;">409 B</div>
<div class="t" style="left:996px;top:473px;font-size:13px;color:#555;line-height:15px;">2024-06-18 15:07:19</div>
<div class="a" style="left:216px;top:533px;width:1617px;height:1px;background:#eeeeee"></div>
<div class="a" style="left:226px;top:508px;width:16px;height:16px;border:1px solid #dcdfe6;border-radius:2px;background:#fff"></div>
<svg style="left:261px;top:506px" width="15" height="20" viewBox="0 0 15 20"><path d="M0 0.5 H10.5 L15 5 V19.5 H0 Z" fill="#ebebeb"/><path d="M10.5 0.5 L15 5 H10.5 Z" fill="#bdbdbd"/><path d="M3 7.8 H12 M3 11.3 H12 M3 15.3 H12" stroke="#cfcfcf" stroke-width="1.1"/></svg>
<div class="t" style="left:285px;top:509px;font-size:13px;color:#555;line-height:15px;">batchShipment.html</div>
<div class="t" style="left:676px;top:510px;font-size:12px;color:#555;line-height:14px;">未保护</div>
<svg style="left:715px;top:511px" width="11" height="11" viewBox="0 0 11 11" stroke="#aaa" stroke-width="1" fill="none"><rect x="3.5" y="5" width="7" height="5.5" rx="0.5"/><path d="M5 5 V3 A2 2 0 0 0 1 3 V4"/></svg>
<div class="t" style="left:796px;top:509px;font-size:13px;color:#555;line-height:15px;">755/www</div>
<div class="t" style="left:896px;top:509px;font-size:13px;color:#555;line-height:15px;">9.93 KB</div>
<div class="t" style="left:996px;top:509px;font-size:13px;color:#555;line-height:15px;">2024-06-18 16:16:18</div>
<div class="a" style="left:216px;top:569px;width:1617px;height:1px;background:#eeeeee"></div>
<div class="a" style="left:226px;top:544px;width:16px;height:16px;border:1px solid #dcdfe6;border-radius:2px;background:#fff"></div>
<svg style="left:258px;top:543px" width="20" height="18" viewBox="0 0 20 18"><path d="M5 1.2 Q8 -0.2 12 1.5 L17.5 5 Q20.5 7.5 19 11 Q17.5 14 12 16.5 Q6 18.5 3 16 Q0 13 0.5 8 Q1 3 5 1.2 Z" fill="#4dbb8b"/><path d="M6.8 5 L10 13.5 L13.2 5" stroke="#1e4a3c" stroke-width="2.3" fill="none"/></svg>
<div class="t" style="left:285px;top:545px;font-size:13px;color:#555;line-height:15px;">favicon.ico</div>
<div class="t" style="left:676px;top:546px;font-size:12px;color:#555;line-height:14px;">未保护</div>
<svg style="left:715px;top:547px" width="11" height="11" viewBox="0 0 11 11" stroke="#aaa" stroke-width="1" fill="none"><rect x="3.5" y="5" width="7" height="5.5" rx="0.5"/><path d="M5 5 V3 A2 2 0 0 0 1 3 V4"/></svg>
<div class="t" style="left:796px;top:545px;font-size:13px;color:#555;line-height:15px;">755/www</div>
<div class="t" style="left:896px;top:545px;font-size:13px;color:#555;line-height:15px;">66.06 KB</div>
<div class="t" style="left:996px;top:545px;font-size:13px;color:#555;line-height:15px;">2024-06-18 16:16:18</div>
<div class="a" style="left:216px;top:605px;width:1617px;height:1px;background:#eeeeee"></div>
<div class="a" style="left:226px;top:580px;width:16px;height:16px;border:1px solid #dcdfe6;border-radius:2px;background:#fff"></div>
<svg style="left:261px;top:578px" width="15" height="20" viewBox="0 0 15 20"><path d="M0 0 H10.5 L15 4.5 V20 H0 Z" fill="#ebe7e3"/><path d="M10.5 0 L15 4.5 H10.5 Z" fill="#d8d4d0"/><path d="M5.8 5.2 L3.6 7.6 L5.8 10 M9.2 5.2 L11.4 7.6 L9.2 10" stroke="#d98a64" stroke-width="1.1" fill="none"/><rect x="0" y="13.6" width="15" height="6.4" rx="1" fill="#e0663a"/><text x="7.5" y="18.8" font-size="5.2" font-family="Liberation Sans" font-weight="bold" fill="#f6d8c8" text-anchor="middle">HTML</text></svg>
<div class="t" style="left:285px;top:581px;font-size:13px;color:#555;line-height:15px;">index.html</div>
<div class="t" style="left:676px;top:582px;font-size:12px;color:#555;line-height:14px;">未保护</div>
<svg style="left:715px;top:583px" width="11" height="11" viewBox="0 0 11 11" stroke="#aaa" stroke-width="1" fill="none"><rect x="3.5" y="5" width="7" height="5.5" rx="0.5"/><path d="M5 5 V3 A2 2 0 0 0 1 3 V4"/></svg>
<div class="t" style="left:796px;top:581px;font-size:13px;color:#555;line-height:15px;">755/www</div>
<div class="t" style="left:896px;top:581px;font-size:13px;color:#555;line-height:15px;">4.40 KB</div>
<div class="t" style="left:996px;top:581px;font-size:13px;color:#555;line-height:15px;">2024-06-18 16:16:18</div>
<div class="t" style="left:228px;top:829px;font-size:12px;color:#555;line-height:14px;">共4个目录，7个文件，</div>
<div class="a" style="left:1413px;top:821px;width:30px;height:28px;background:#f4f4f5;border-radius:2px"></div>
<svg style="left:1424px;top:830px" width="7" height="10" viewBox="0 0 7 10" stroke="#c0c4cc" stroke-width="1.3" fill="none"><path d="M6 0.5 L1 5 L6 9.5"/></svg>
<div class="a" style="left:1453px;top:821px;width:30px;height:28px;background:#8fd19e;border-radius:2px;color:#fff;font-weight:bold;font-size:13px;line-height:28px;text-align:center">1</div>
<div class="a" style="left:1493px;top:821px;width:30px;height:28px;background:#f4f4f5;border-radius:2px"></div>
<svg style="left:1505px;top:830px" width="7" height="10" viewBox="0 0 7 10" stroke="#c0c4cc" stroke-width="1.3" fill="none"><path d="M1 0.5 L6 5 L1 9.5"/></svg>
<div class="a" style="left:1533px;top:821px;width:100px;height:28px;border:1px solid #dcdfe6;border-radius:3px"></div>
<div class="t" style="left:1548px;top:828px;font-size:13px;color:#606266;line-height:15px;">500条/页</div>
<svg style="left:1613px;top:833px" width="10" height="6" viewBox="0 0 10 6" stroke="#c0c4cc" stroke-width="1.1" fill="none"><path d="M0.5 0.5 L5 5 L9.5 0.5"/></svg>
<div class="t" style="left:1648px;top:828px;font-size:13px;color:#606266;line-height:15px;">共 11 条</div>
<div class="t" style="left:1715px;top:828px;font-size:13px;color:#606266;line-height:15px;">前往</div>
<div class="a" style="left:1745px;top:821px;width:46px;height:28px;border:1px solid #dcdfe6;border-radius:3px;font-size:13px;line-height:26px;text-align:center;color:#606266">1</div>
<div class="t" style="left:1795px;top:828px;font-size:13px;color:#606266;line-height:15px;">页</div>
<div class="a" style="left:1829px;top:716px;width:50px;height:151px;background:#fff;border-radius:5px;box-shadow:0 0 4px rgba(0,0,0,0.12)"></div>
<svg style="left:1841px;top:729px" width="14" height="13" viewBox="0 0 14 13" fill="none" stroke="#20a53a"><path d="M0.6 7.5 A6.4 6.4 0 0 1 13.4 7.5" stroke-width="1"/><path d="M0.2 8.8 Q0.3 2.2 7 1.8 Q13.7 2.2 13.8 8.8 L12.2 8.8 Q12 5.5 10.2 4.6 Q8.8 6.8 3.8 7.2 Q2.6 7.8 2.4 9.2 Z" fill="#20a53a" stroke="none"/><path d="M3 9.2 Q4.5 11.4 7 11.4 Q9.6 11.4 10.8 9.2" stroke-width="0.9"/><path d="M5.8 12.3 Q9.5 12.5 11.6 10" stroke-width="0.9"/></svg>
<div class="t" style="left:1841px;top:750px;font-size:13px;line-height:14.5px;color:#20a53a;width:13px;white-space:normal">客服</div>
<svg style="left:1841px;top:804px" width="14" height="14" viewBox="0 0 14 14" stroke="#20a53a" stroke-width="1.3" fill="none"><path d="M7 1.5 H1.5 V12.5 H12.5 V7"/><path d="M5.5 8.5 L6 6 L11 1 L13 3 L8 8 Z"/></svg>
<div class="t" style="left:1841px;top:826px;font-size:13px;line-height:14.5px;color:#20a53a;width:13px;white-space:normal">评价</div>
<div class="a" style="left:349px;top:441px;width:188px;height:404px;background:#fff;border-radius:4px;box-shadow:0 2px 8px rgba(0,0,0,0.15)"></div>
<div class="a" style="left:349px;top:567px;width:188px;height:1px;background:#e4e4e4"></div>
<div class="a" style="left:349px;top:627px;width:188px;height:1px;background:#e4e4e4"></div>
<div class="a" style="left:349px;top:748px;width:188px;height:1px;background:#e4e4e4"></div>
<div class="a" style="left:349px;top:810px;width:188px;height:1px;background:#e4e4e4"></div>
<div class="t" style="left:389px;top:455px;font-size:12px;color:#333;line-height:14px;">下载</div>
<div class="t" style="left:389px;top:485px;font-size:12px;color:#333;line-height:14px;">文件拆分</div>
<div class="t" style="left:389px;top:515px;font-size:12px;color:#333;line-height:14px;">添加到收藏夹</div>
<div class="t" style="left:389px;top:545px;font-size:12px;color:#333;line-height:14px;">外链分享</div>
<div class="t" style="left:389px;top:577px;font-size:12px;color:#333;line-height:14px;">上传到云存储</div>
<div class="t" style="left:389px;top:606px;font-size:12px;color:#333;line-height:14px;">权限</div>
<div class="t" style="left:389px;top:637px;font-size:12px;color:#333;line-height:14px;">复制</div>
<div class="t" style="left:389px;top:667px;font-size:12px;color:#333;line-height:14px;">剪切</div>
<div class="t" style="left:389px;top:697px;font-size:12px;color:#333;line-height:14px;">重命名</div>
<div class="t" style="left:389px;top:727px;font-size:12px;color:#333;line-height:14px;">删除</div>
<div class="t" style="left:389px;top:758px;font-size:12px;color:#333;line-height:14px;">创建压缩</div>
<div class="t" style="left:389px;top:788px;font-size:12px;color:#333;line-height:14px;">解压</div>
<div class="t" style="left:389px;top:819px;font-size:12px;color:#333;line-height:14px;">属性</div>
<svg style="left:363px;top:453px" width="16" height="16" viewBox="0 0 16 16"><path d="M5 0 H11 V8 H15.5 L8 16 L0.5 8 H5 Z" fill="#3a8ee6"/></svg>
<svg style="left:363px;top:483px" width="16" height="16" viewBox="0 0 16 16"><defs><radialGradient id="mg" cx="0.4" cy="0.4" r="0.6"><stop offset="0" stop-color="#fff"/><stop offset="1" stop-color="#9cc7ec"/></radialGradient></defs><circle cx="10" cy="5.5" r="4.8" fill="url(#mg)" stroke="#6a9fd0" stroke-width="1"/><path d="M1 15 L6 10" stroke="#666" stroke-width="1.8"/><path d="M7 10.5 H11 V8.5 L14.5 11.5 L11 14.5 V12.5 H7 Z" fill="#2f7fd8"/></svg>
<svg style="left:363px;top:513px" width="16" height="16" viewBox="0 0 16 16"><defs><linearGradient id="sg2" x1="0" y1="0" x2="0" y2="1"><stop offset="0" stop-color="#ffd957"/><stop offset="1" stop-color="#f5901a"/></linearGradient></defs><path d="M7.5 0.3 L9.9 5 L15 5.6 L11.3 9.2 L12.3 14.6 L7.5 12.1 L2.7 14.6 L3.7 9.2 L0 5.6 L5.1 5 Z" fill="url(#sg2)" stroke="url(#sg2)" stroke-width="1.2" stroke-linejoin="round"/></svg>
<svg style="left:363px;top:543px" width="16" height="16" viewBox="0 0 16 16"><circle cx="12.5" cy="3" r="2.6" fill="#22b04a"/><circle cx="3" cy="8" r="2.6" fill="#22b04a"/><circle cx="12.5" cy="13" r="2.6" fill="#22b04a"/><path d="M12.5 3 L3 8 L12.5 13" stroke="#22b04a" stroke-width="1.8" fill="none"/></svg>
<svg style="left:363px;top:575px" width="16" height="16" viewBox="0 0 16 16"><path d="M8 0 L15.5 8 H11 V16 H5 V8 H0.5 Z" fill="#3a8ee6"/></svg>
<svg style="left:522px;top:577px" width="6" height="10" viewBox="0 0 6 10" stroke="#555" stroke-width="1.1" fill="none"><path d="M0.8 0.8 L5 5 L0.8 9.2"/></svg>
<svg style="left:363px;top:605px" width="16" height="16" viewBox="0 0 16 16"><path d="M0 1 H6 L7.5 2.5 H15 V13 H0 Z" fill="#f5cb44"/><path d="M0 3.5 H15 V13 H0 Z" fill="#f8d95c"/><circle cx="8" cy="6.5" r="1.3" fill="none" stroke="#fff" stroke-width="0.8"/><path d="M8 8 V10.5" stroke="#fff" stroke-width="0.8"/></svg>
<svg style="left:363px;top:635px" width="16" height="16" viewBox="0 0 16 16"><path d="M1.5 0.5 H7 L9.5 3 V4.5 M1.5 0.5 V12.5 H5.5" stroke="#888" fill="none" stroke-width="1"/><path d="M3 2 H6.5 M3 4 H6 M3 6 H5" stroke="#9aa" stroke-width="0.8"/><path d="M5.5 4.5 H11 L14.5 8 V15.5 H5.5 Z" fill="#fff" stroke="#888" stroke-width="1"/><path d="M11 4.5 V8 H14.5" fill="none" stroke="#888" stroke-width="0.8"/><path d="M7.5 9.5 H12.5 M7.5 11.5 H12.5 M7.5 13.5 H12.5" stroke="#4d8fd6" stroke-width="0.8"/></svg>
<svg style="left:363px;top:665px" width="16" height="16" viewBox="0 0 16 16"><path d="M4 0.5 L9 10 M12 0.5 L7 10" stroke="#888" stroke-width="1.1"/><circle cx="5" cy="12.5" r="2.3" fill="none" stroke="#2f7fd8" stroke-width="1.5"/><circle cx="11" cy="12.5" r="2.3" fill="none" stroke="#2f7fd8" stroke-width="1.5"/></svg>
<svg style="left:363px;top:695px" width="16" height="16" viewBox="0 0 16 16"><rect x="0.5" y="5" width="12" height="6" fill="#fff" stroke="#888" stroke-width="1"/><rect x="2" y="6.5" width="7" height="3" fill="#3a8ee6"/><path d="M10 1 H15 M12.5 1 V15 M10 15 H15" stroke="#555" stroke-width="1.1"/></svg>
<svg style="left:363px;top:726px" width="16" height="16" viewBox="0 0 16 16"><path d="M2 2 L14 14 M14 2 L2 14" stroke="#c91a25" stroke-width="3.2"/></svg>
<svg style="left:365px;top:756px" width="16" height="16" viewBox="0 0 16 16"><path d="M0.5 0.5 H12.5 V15.5 H0.5 Z" fill="#f8df8e" stroke="#d8bd5c" stroke-width="0.8"/><path d="M5.5 0.5 H8.5 V13.5 H5.5 Z" fill="#eeeeee" stroke="#8a8a8a" stroke-width="0.7"/><path d="M7 2.5 V12.5" stroke="#666" stroke-width="0.9" stroke-dasharray="1 1"/><rect x="10" y="10.5" width="3" height="5" fill="#efbe2c"/></svg>
<svg style="left:365px;top:786px" width="16" height="17" viewBox="0 0 16 17"><path d="M0.5 0.5 H12.5 V15.5 H0.5 Z" fill="#f8df8e" stroke="#d8bd5c" stroke-width="0.8"/><path d="M5.5 0.5 H8.5 V7 H5.5 Z" fill="#eeeeee" stroke="#8a8a8a" stroke-width="0.7"/><path d="M7 1.5 V6" stroke="#666" stroke-width="0.9" stroke-dasharray="1 1"/><rect x="6.5" y="8.5" width="3.2" height="3.2" fill="#fff" stroke="#4b9be0" stroke-width="0.9"/><rect x="11" y="8.5" width="3.2" height="3.2" fill="#fff" stroke="#4b9be0" stroke-width="0.9"/><rect x="6.5" y="12.8" width="3.2" height="3.2" fill="#fff" stroke="#4b9be0" stroke-width="0.9"/><rect x="11" y="12.8" width="3.2" height="3.2" fill="#fff" stroke="#4b9be0" stroke-width="0.9"/></svg>
<svg style="left:363px;top:817px" width="16" height="16" viewBox="0 0 16 16"><circle cx="8" cy="8" r="8" fill="#999"/><rect x="6.8" y="3" width="2.4" height="6.5" rx="1" fill="#fff"/><rect x="6.8" y="11" width="2.4" height="2.4" rx="1" fill="#fff"/></svg>
<div class="a" style="left:340px;top:776px;width:183px;height:34px;border:3px solid #e5211d;border-radius:4px"></div>
</body></html>
